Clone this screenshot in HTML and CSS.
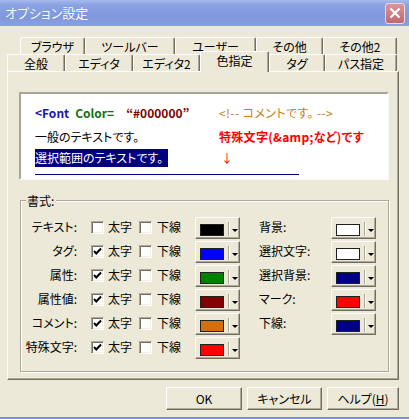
FILE: index.html
```html
<!DOCTYPE html>
<html lang="ja">
<head>
<meta charset="utf-8">
<title>オプション設定</title>
<link rel="stylesheet" href="styles.css">
</head>
<body>
<div class="window">
  <div class="titlebar">
    <span class="title">オプション設定</span>
    <span class="close"><svg width="12" height="12" viewBox="0 0 12 12"><path d="M1.5 1.5 L10.5 10.5 M10.5 1.5 L1.5 10.5" stroke="#fff" stroke-width="2.2" fill="none"/></svg></span>
  </div>
  <div class="main">
    <div class="tabrow back">
      <div class="tab w65">ブラウザ</div>
      <div class="tab w90">ツールバー</div>
      <div class="tab w81">ユーザー</div>
      <div class="tab w67">その他</div>
      <div class="tab w74">その他2</div>
    </div>
    <div class="tabrow front">
      <div class="tab w58">全般</div>
      <div class="tab w68">エディタ</div>
      <div class="tab w67">エディタ2</div>
      <div class="tab w69 sel">色指定</div>
      <div class="tab w56">タグ</div>
      <div class="tab w72">パス指定</div>
    </div>
    <div class="panel">
      <div class="preview">
        <div class="pv-grid">
          <div class="pv"><span class="c-tag">&lt;Font</span> <span class="c-attr">Color=</span><span class="c-val">“#000000”</span></div>
          <div class="pv c-com">&lt;!-- コメントです。 --&gt;</div>
          <div class="pv">一般のテキストです。</div>
          <div class="pv c-sp">特殊文字(&amp;amp;など)です</div>
          <div class="pv"><span class="hl">選択範囲のテキストです。</span></div>
          <div class="pv c-arrow">↓</div>
        </div>
        <div class="uline"></div>
      </div>
      <div class="group">
        <div class="gtitle">書式:</div>
        <div class="rows">
          <div class="row">
            <span class="lbl">テキスト:</span>
            <span class="cb"></span><span class="t1">太字</span>
            <span class="cb"></span><span class="t2">下線</span>
            <span class="cbtn"><span class="sw" style="background:#000000"></span><span class="sep"></span><span class="arr"></span></span>
            <span class="rlbl">背景:</span>
            <span class="cbtn"><span class="sw" style="background:#ffffff"></span><span class="sep"></span><span class="arr"></span></span>
          </div>
          <div class="row">
            <span class="lbl">タグ:</span>
            <span class="cb on"><svg width="9" height="9" viewBox="0 0 9 9"><path d="M1 4 L3.3 6.5 L8 1.5" stroke="#000" stroke-width="2" fill="none"/></svg></span><span class="t1">太字</span>
            <span class="cb"></span><span class="t2">下線</span>
            <span class="cbtn"><span class="sw" style="background:#0000ff"></span><span class="sep"></span><span class="arr"></span></span>
            <span class="rlbl">選択文字:</span>
            <span class="cbtn"><span class="sw" style="background:#ffffff"></span><span class="sep"></span><span class="arr"></span></span>
          </div>
          <div class="row">
            <span class="lbl">属性:</span>
            <span class="cb on"><svg width="9" height="9" viewBox="0 0 9 9"><path d="M1 4 L3.3 6.5 L8 1.5" stroke="#000" stroke-width="2" fill="none"/></svg></span><span class="t1">太字</span>
            <span class="cb"></span><span class="t2">下線</span>
            <span class="cbtn"><span class="sw" style="background:#008000"></span><span class="sep"></span><span class="arr"></span></span>
            <span class="rlbl">選択背景:</span>
            <span class="cbtn"><span class="sw" style="background:#000080"></span><span class="sep"></span><span class="arr"></span></span>
          </div>
          <div class="row">
            <span class="lbl">属性値:</span>
            <span class="cb on"><svg width="9" height="9" viewBox="0 0 9 9"><path d="M1 4 L3.3 6.5 L8 1.5" stroke="#000" stroke-width="2" fill="none"/></svg></span><span class="t1">太字</span>
            <span class="cb"></span><span class="t2">下線</span>
            <span class="cbtn"><span class="sw" style="background:#800000"></span><span class="sep"></span><span class="arr"></span></span>
            <span class="rlbl">マーク:</span>
            <span class="cbtn"><span class="sw" style="background:#ff0000"></span><span class="sep"></span><span class="arr"></span></span>
          </div>
          <div class="row">
            <span class="lbl">コメント:</span>
            <span class="cb on"><svg width="9" height="9" viewBox="0 0 9 9"><path d="M1 4 L3.3 6.5 L8 1.5" stroke="#000" stroke-width="2" fill="none"/></svg></span><span class="t1">太字</span>
            <span class="cb"></span><span class="t2">下線</span>
            <span class="cbtn"><span class="sw" style="background:#d07010"></span><span class="sep"></span><span class="arr"></span></span>
            <span class="rlbl">下線:</span>
            <span class="cbtn"><span class="sw" style="background:#000080"></span><span class="sep"></span><span class="arr"></span></span>
          </div>
          <div class="row">
            <span class="lbl">特殊文字:</span>
            <span class="cb on"><svg width="9" height="9" viewBox="0 0 9 9"><path d="M1 4 L3.3 6.5 L8 1.5" stroke="#000" stroke-width="2" fill="none"/></svg></span><span class="t1">太字</span>
            <span class="cb"></span><span class="t2">下線</span>
            <span class="cbtn"><span class="sw" style="background:#ff0000"></span><span class="sep"></span><span class="arr"></span></span>
          </div>
        </div>
      </div>
    </div>
    <div class="btns">
      <div class="btn b-ok">OK</div>
      <div class="btn b-cancel">キャンセル</div>
      <div class="btn b-help">ヘルプ(<u>H</u>)</div>
    </div>
  </div>
</div>
</body>
</html>
```
FILE: styles.css
```css
* { box-sizing: border-box; }
body {
  margin: 0;
  width: 409px;
  height: 419px;
  overflow: hidden;
  background: #ece9d8;
  font-family: "Noto Sans CJK JP", "MS UI Gothic", sans-serif;
  font-size: 12px;
  font-feature-settings: "palt";
  color: #000;
}
.window {
  height: 419px;
  display: flex;
  flex-direction: column;
  border-bottom: 2px solid #7b8fd6;
}
.titlebar {
  height: 26px;
  flex: none;
  display: flex;
  align-items: center;
  justify-content: space-between;
  padding: 0 4px 0 5px;
  background: linear-gradient(#a7baee, #8ca3e2 18%, #7f98dc 65%, #8aa1e2);
  color: #fff;
  font-size: 13px;
}
.title { line-height: 16px; text-shadow: 0 0 1px rgba(60,80,150,.4); }
.close {
  width: 20px;
  height: 21px;
  border: 1px solid #f0dada;
  border-radius: 3px;
  background: linear-gradient(#d8969a, #c1686e);
  display: flex;
  align-items: center;
  justify-content: center;
}
.main {
  flex: 1;
  padding: 11px 10px 0 7px;
  display: flex;
  flex-direction: column;
}
.tabrow { display: flex; height: 17px; flex: none; }
.tabrow.back { margin-left: 13px; }
.tab {
  height: 17px;
  border: 1px solid #fff;
  border-bottom: 0;
  border-right-color: #716f64;
  border-radius: 2px 2px 0 0;
  box-shadow: inset -1px 0 #aca899;
  display: flex;
  align-items: center;
  justify-content: center;
  line-height: 15px;
  white-space: nowrap;
}
.tab.sel {
  height: 21px;
  margin-top: -3px;
  position: relative;
  z-index: 1;
  background: #ece9d8;
  align-items: flex-start;
  padding-top: 1px;
}
.w56 { width: 56px; } .w58 { width: 58px; } .w65 { width: 65px; }
.w67 { width: 67px; } .w68 { width: 68px; } .w69 { width: 69px; }
.w72 { width: 72px; } .w74 { width: 74px; } .w81 { width: 81px; }
.w90 { width: 90px; }
.panel {
  width: 392px;
  height: 309px;
  flex: none;
  border: 1px solid #fff;
  border-right-color: #716f64;
  border-bottom-color: #716f64;
  box-shadow: inset -1px -1px #aca899;
  display: flex;
  flex-direction: column;
}
.preview {
  margin: 20px 0 0 11px;
  width: 370px;
  height: 88px;
  background: #fff;
  border: 2px solid;
  border-color: #a9a698 #fbfbf8 #fbfbf8 #a9a698;
  padding: 7px 0 0 14px;
}
.pv-grid {
  display: grid;
  grid-template-columns: 184px 1fr;
  grid-template-rows: 24px 24px 18px;
}
.pv { display: flex; align-items: center; white-space: nowrap; line-height: 16px; }
.c-tag { color: #1818b0; font-weight: bold; }
.c-attr { color: #137013; font-weight: bold; margin-left: 6px; }
.c-val { color: #800000; font-weight: bold; margin-left: 12px; }
.c-com { color: #c8801e; letter-spacing: 0.4px; }
.c-sp { color: #f00; font-weight: bold; letter-spacing: 0.3px; }
.c-arrow { color: #f00; padding-left: 2px; }
.hl {
  display: inline-block;
  background: #00007f;
  color: #fff;
  line-height: 18px;
  width: 133px;
}
.uline { width: 264px; height: 1px; background: #000080; margin-top: 7px; }
.group {
  margin: 20px 0 0 12px;
  width: 369px;
  height: 172px;
  border: 1px solid #aca899;
  box-shadow: inset 1px 1px #fff, 1px 1px #fff;
}
.gtitle {
  margin: -8px 0 0 5px;
  padding: 0 2px 0 1px;
  background: #ece9d8;
  width: max-content;
  line-height: 15px;
}
.rows { margin-top: 6px; }
.row { display: flex; height: 24px; align-items: center; white-space: nowrap; }
.lbl { width: 56px; text-align: right; margin-right: 14px; flex: none; }
.cb {
  width: 13px;
  height: 13px;
  flex: none;
  margin-top: 3px;
  background: #fff;
  border: 1px solid;
  border-color: #aca899 #fff #fff #aca899;
  box-shadow: inset 1px 1px #716f64, inset -1px -1px #f1efe2;
  display: flex;
  align-items: center;
  justify-content: center;
}
.t1 { width: 35px; padding-left: 4px; flex: none; }
.t2 { width: 43px; padding-left: 5px; flex: none; }
.cbtn {
  width: 45px;
  height: 22px;
  flex: none;
  margin-top: 4px;
  border: 1px solid;
  border-color: #fff #716f64 #716f64 #fff;
  box-shadow: inset -1px -1px #aca899;
  display: flex;
  align-items: flex-start;
}
.sw {
  width: 24px;
  height: 12px;
  margin: 6px 0 0 4px;
  border: 1px solid #202020;
  flex: none;
}
.sep {
  width: 2px;
  height: 14px;
  margin: 4px 0 0 4px;
  border-left: 1px solid #aca899;
  border-right: 1px solid #fff;
  flex: none;
}
.arr {
  width: 0;
  height: 0;
  margin: 11px 0 0 2px;
  border-left: 3px solid transparent;
  border-right: 3px solid transparent;
  border-top: 3px solid #000;
  flex: none;
}
.rlbl { width: 91px; padding-left: 19px; flex: none; }
.btns {
  display: flex;
  justify-content: flex-end;
  gap: 5px;
  margin-top: 7px;
}
.btn {
  height: 23px;
  border: 1px solid;
  border-color: #fff #716f64 #716f64 #fff;
  box-shadow: inset -1px -1px #aca899;
  display: flex;
  align-items: center;
  justify-content: center;
  background: #ece9d8;
}
.b-ok { width: 76px; }
.b-cancel { width: 75px; }
.b-help { width: 72px; }
```
